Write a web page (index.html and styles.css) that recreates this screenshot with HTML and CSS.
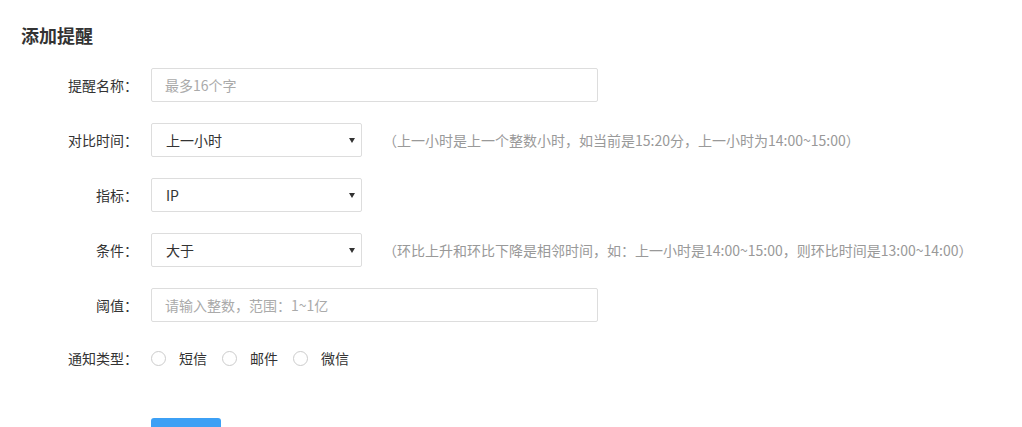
FILE: index.html
```html
<!DOCTYPE html>
<html lang="zh-CN">
<head>
    <meta charset="UTF-8">
    <title>添加提醒</title>
    <link rel="stylesheet" href="styles.css">
</head>
<body>
    <div class="page">
        <h2 class="title">添加提醒</h2>

        <form class="form">
            <div class="row">
                <label class="label">提醒名称：</label>
                <input class="input" type="text" placeholder="最多16个字">
            </div>

            <div class="row">
                <label class="label">对比时间：</label>
                <div class="select-wrap">
                    <select class="select">
                        <option>上一小时</option>
                        <option>昨日同时段</option>
                    </select>
                </div>
                <span class="tip">（上一小时是上一个整数小时，如当前是15:20分，上一小时为14:00~15:00）</span>
            </div>

            <div class="row">
                <label class="label">指标：</label>
                <div class="select-wrap">
                    <select class="select">
                        <option>IP</option>
                        <option>PV</option>
                        <option>UV</option>
                    </select>
                </div>
            </div>

            <div class="row">
                <label class="label">条件：</label>
                <div class="select-wrap">
                    <select class="select">
                        <option>大于</option>
                        <option>小于</option>
                    </select>
                </div>
                <span class="tip">（环比上升和环比下降是相邻时间，如：上一小时是14:00~15:00，则环比时间是13:00~14:00）</span>
            </div>

            <div class="row">
                <label class="label">阈值：</label>
                <input class="input" type="text" placeholder="请输入整数，范围：1~1亿">
            </div>

            <div class="row row-radio">
                <label class="label">通知类型：</label>
                <label class="radio"><input type="radio" name="notify"><span>短信</span></label>
                <label class="radio"><input type="radio" name="notify"><span>邮件</span></label>
                <label class="radio"><input type="radio" name="notify"><span>微信</span></label>
            </div>

            <div class="actions">
                <button type="button" class="btn">保存</button>
            </div>
        </form>
    </div>
</body>
</html>
```

FILE: styles.css
```css
* {
    margin: 0;
    padding: 0;
    box-sizing: border-box;
}

body {
    font-family: "Noto Sans CJK TC", "Noto Sans CJK SC", "Noto Sans", sans-serif;
    font-size: 14px;
    color: #333;
    background: #fff;
}

.page {
    padding: 24px 21px 0;
}

.title {
    font-size: 18px;
    font-weight: bold;
    line-height: 22px;
    color: #333;
}

.form {
    margin-top: 22px;
}

.row {
    display: flex;
    align-items: center;
    height: 34px;
    margin-bottom: 21px;
}

.label {
    width: 117px;
    text-align: right;
    color: #333;
    flex-shrink: 0;
    margin-right: 13px;
}

.input {
    width: 447px;
    height: 34px;
    border: 1px solid #ddd;
    border-radius: 2px;
    padding: 0 13px;
    font: inherit;
    color: #333;
    outline: none;
}

.input::placeholder {
    color: #aaa;
}

.select-wrap {
    position: relative;
    width: 211px;
    height: 34px;
}

.select-wrap::after {
    content: "";
    position: absolute;
    right: 7px;
    top: 15px;
    border-left: 3px solid transparent;
    border-right: 3px solid transparent;
    border-top: 5px solid #333;
    pointer-events: none;
}

.select {
    appearance: none;
    -webkit-appearance: none;
    width: 100%;
    height: 100%;
    border: 1px solid #ddd;
    border-radius: 2px;
    padding: 0 14px;
    font: inherit;
    color: #333;
    background: #fff;
    outline: none;
}

.tip {
    margin-left: 21px;
    color: #999;
    white-space: nowrap;
}

.row-radio {
    margin-top: 26px;
    height: 20px;
    margin-bottom: 0;
}

.radio {
    display: flex;
    align-items: center;
    margin-right: 15px;
    cursor: pointer;
}

.radio input {
    appearance: none;
    -webkit-appearance: none;
    width: 15px;
    height: 15px;
    border: 1px solid #ccc;
    border-radius: 50%;
    margin-right: 13px;
}

.radio input:checked {
    border: 4px solid #3ca0f5;
}

.actions {
    padding-left: 130px;
    margin-top: 50px;
}

.btn {
    width: 70px;
    height: 34px;
    border: none;
    border-radius: 3px;
    background: #3ca0f5;
    color: #fff;
    font: inherit;
    cursor: pointer;
}
```
